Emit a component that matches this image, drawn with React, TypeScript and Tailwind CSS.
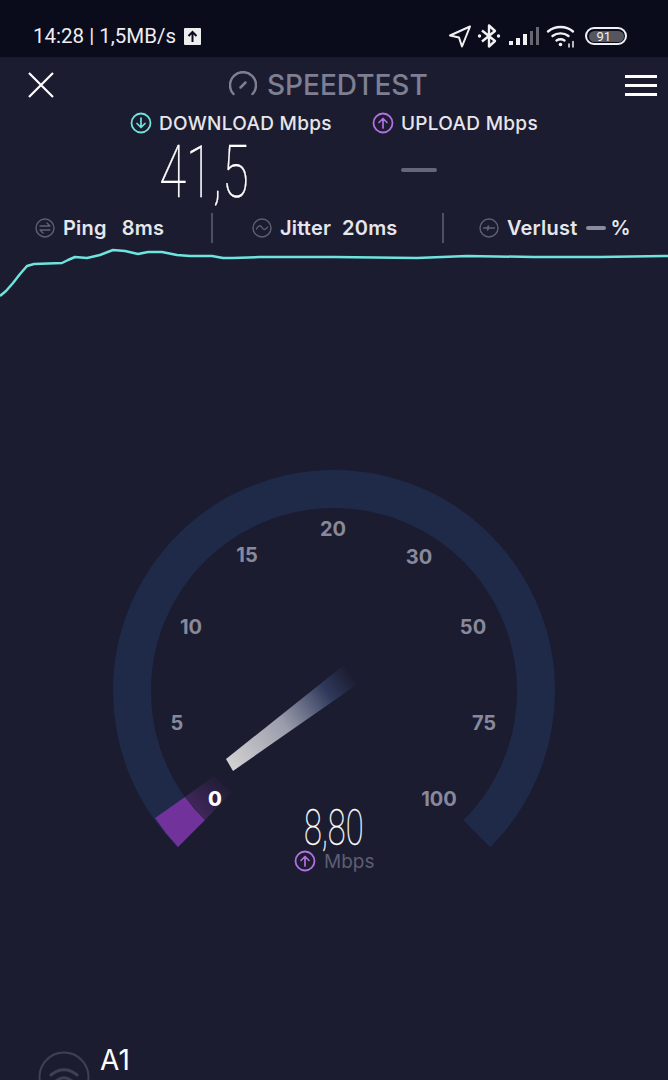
import type { JSX, ReactNode } from 'react'

const LINE_POINTS =
  '0,296 6,291 13,283 20,274 27,266 34,264 62,263 68,260 75,257 87,258 100,255 113,250 125,251 138,254 148,252 162,252 177,255 190,256 212,256 223,258 233,258 260,257 334,257 417,258 467,256 534,257 600,257 664,256 668,256'

const TICKS = [
  { label: '20', x: 333, y: 529 },
  { label: '15', x: 247, y: 555 },
  { label: '10', x: 191, y: 627 },
  { label: '5', x: 177, y: 723 },
  { label: '30', x: 419, y: 557 },
  { label: '50', x: 473, y: 627 },
  { label: '75', x: 484, y: 723 },
  { label: '100', x: 439, y: 799 },
]

function ArrowCircle({ down, color }: { down?: boolean; color: string }): JSX.Element {
  return (
    <svg width="22" height="22" viewBox="0 0 22 22" fill="none" stroke={color} strokeLinecap="round" strokeLinejoin="round" className="shrink-0">
      <circle cx="11" cy="11" r="9.5" strokeWidth="1.8" />
      {down ? (
        <path d="M11 6v9M7 11.5l4 4 4-4" strokeWidth="1.7" />
      ) : (
        <path d="M11 16V7M7 10.5l4-4 4 4" strokeWidth="1.7" />
      )}
    </svg>
  )
}

function StatIcon({ children }: { children: ReactNode }): JSX.Element {
  return (
    <svg width="20" height="20" viewBox="0 0 20 20" fill="none" stroke="#5f6073" strokeWidth="1.4" strokeLinecap="round" strokeLinejoin="round" className="shrink-0">
      <circle cx="10" cy="10" r="9" />
      {children}
    </svg>
  )
}

function StatusIcons(): JSX.Element {
  return (
    <div className="flex items-center">
      {/* location */}
      <svg width="24" height="24" viewBox="0 0 24 24" fill="none" stroke="#f1f1f4" strokeWidth="2" strokeLinejoin="round" className="mr-[5px]">
        <path d="M22 2.500 2 11.500l9 2 3 9z" />
      </svg>
      {/* bluetooth */}
      <svg width="24" height="26" viewBox="0 0 24 26" fill="none" stroke="#f1f1f4" strokeWidth="2.400" strokeLinejoin="round" className="mr-[8px]">
        <path d="M5 7.500 18 18l-6 5.500v-21L18 8 5 18.500" />
        <circle cx="2.500" cy="13" r="1.700" fill="#f1f1f4" stroke="none" />
        <circle cx="21.500" cy="13" r="1.700" fill="#f1f1f4" stroke="none" />
      </svg>
      {/* signal */}
      <div className="flex items-end gap-[3px] h-[18px] mr-[7px]">
        <div className="w-[4px] h-[4px] bg-[#f1f1f4]" />
        <div className="w-[4px] h-[7px] bg-[#f1f1f4]" />
        <div className="w-[4px] h-[11px] bg-[#f1f1f4]" />
        <div className="w-[3px] h-[14px] bg-[#66676f]" />
        <div className="w-[3px] h-[18px] bg-[#66676f]" />
      </div>
      {/* wifi */}
      <svg width="30" height="24" viewBox="0 0 30 24" fill="none" stroke="#f1f1f4" strokeWidth="2.400" strokeLinecap="round" className="mr-[9px]">
        <path d="M2 7.500C9 1.500 20 1.500 27 7.500" />
        <path d="M6.500 12C11 8.500 18 8.500 22.500 12" />
        <path d="M10.500 16.500C13 15 16 15 18.500 16.500" />
        <circle cx="14.500" cy="20.500" r="1.800" fill="#f1f1f4" stroke="none" />
        <path d="M23 20v3M27 17.500v5.500" strokeWidth="1.500" />
      </svg>
      {/* battery */}
      <div className="w-[42px] h-[18px] rounded-full border-2 border-[#f1f1f4] p-[1.500px] flex">
        <div className="w-full rounded-full bg-[#55565e] flex items-center pl-[8px] font-['Roboto',sans-serif] text-[13px] leading-none text-[#f1f1f4]">
          91
        </div>
      </div>
    </div>
  )
}

function Gauge(): JSX.Element {
  return (
    <svg width="668" height="730" viewBox="0 303 668 730" className="block">
      <defs>
        <linearGradient id="needle" gradientUnits="userSpaceOnUse" x1="229" y1="765" x2="352" y2="675">
          <stop offset="0" stopColor="#d2d2d2" />
          <stop offset="0.45" stopColor="#9a9cab" />
          <stop offset="0.8" stopColor="#2f3a5c" />
          <stop offset="1" stopColor="#1b1c30" />
        </linearGradient>
        <linearGradient id="wedge" gradientUnits="userSpaceOnUse" x1="195" y1="808" x2="226" y2="778">
          <stop offset="0" stopColor="#3f2659" />
          <stop offset="1" stopColor="#1b1c30" />
        </linearGradient>
      </defs>
      <path d="M191.200 833.800A202 202 0 1 1 476.800 833.800" fill="none" stroke="#1e2a47" strokeWidth="38" />
      <path d="M155 818A221 221 0 0 0 178 847L205 820A183 183 0 0 1 185 797Z" fill="#71329b" />
      <polygon points="185,797 205,820 232,792 214,776" fill="url(#wedge)" />
      <polygon points="226,759 233,771 362,681 344,665" fill="url(#needle)" />
      <g fontFamily="Inter, sans-serif" fontWeight="700" fontSize="20" fill="#88899a" textAnchor="middle" dominantBaseline="central">
        {TICKS.map((t) => (
          <text key={t.label} x={t.x} y={t.y}>
            {t.label}
          </text>
        ))}
        <text x="215" y="799" fill="#ffffff" fontWeight="800">
          0
        </text>
      </g>
    </svg>
  )
}

export default function App(): JSX.Element {
  return (
    <div className="relative w-[668px] h-[1080px] overflow-hidden bg-[#1b1c30] font-['Inter',sans-serif] text-[#e6e6ec]">
      {/* Status bar */}
      <div className="h-[57px] bg-[#0a0b1b] flex items-center justify-between pl-[33px] pr-[41px] pt-[15px]">
        <div className="flex items-center gap-[8px] font-['Roboto',sans-serif] text-[20.5px] text-[#eeeef1]">
          <span>14:28 | 1,5MB/s</span>
          <div className="w-[17px] h-[17px] rounded-[1px] bg-[#eeeef1] flex items-center justify-center">
            <svg width="13" height="13" viewBox="0 0 13 13" fill="none" stroke="#0a0b1b" strokeWidth="2">
              <path d="M6.500 12V2M2.500 6l4-4 4 4" />
            </svg>
          </div>
        </div>
        <StatusIcons />
      </div>

      {/* Header */}
      <div className="relative h-[56px] flex items-center justify-between pl-[27px] pr-[11px]">
        <svg width="28" height="28" viewBox="0 0 28 28" stroke="#ffffff" strokeWidth="2.200" fill="none">
          <path d="M2 2l24 24M26 2L2 26" />
        </svg>
        <div className="absolute left-[229px] top-0 h-full flex items-center gap-[10px]">
          <svg width="28" height="28" viewBox="0 0 28 28" fill="none" stroke="#7e7f92" strokeWidth="2.500" strokeLinecap="round">
            <path d="M4.500 23A13 13 0 1 1 23.500 23" />
            <path d="M11.500 16.500l5-5" />
          </svg>
          <span className="text-[28px] font-medium leading-none text-[#7e7f92]">SPEEDTEST</span>
        </div>
        <div className="flex flex-col gap-[6px] w-[32px]">
          <div className="h-[3px] bg-white" />
          <div className="h-[3px] bg-white" />
          <div className="h-[3px] bg-white" />
        </div>
      </div>

      {/* Download / upload labels */}
      <div className="flex h-[20px] items-center pl-[130px] text-[19px] tracking-[0.3px] font-medium leading-none">
        <div className="flex items-center gap-[7px] w-[242px]">
          <ArrowCircle down color="#6fe3de" />
          <span>DOWNLOAD Mbps</span>
        </div>
        <div className="flex items-center gap-[7px]">
          <ArrowCircle color="#b46fe0" />
          <span>UPLOAD Mbps</span>
        </div>
      </div>

      {/* Values */}
      <div className="flex h-[80px] items-center">
        <div className="w-[408px] flex justify-center">
          <span className="block w-[140px] text-center font-['Roboto',sans-serif] font-thin text-[72px] leading-[60px] text-white scale-x-[0.68] [-webkit-text-stroke:0.35px_#ffffff]">
            41,5
          </span>
        </div>
        <div className="ml-[-7px] mt-[-6px] w-[36px] h-[4px] rounded-full bg-[#65667a]" />
      </div>

      {/* Ping, jitter, loss */}
      <div className="flex h-[30px] items-center text-[20px] tracking-[0.2px] font-semibold leading-none">
        <div className="flex items-center w-[211px] pl-[35px]">
          <StatIcon>
            <path d="M5 8h10l-3-3M15 12H5l3 3" />
          </StatIcon>
          <span className="ml-[8px]">Ping</span>
          <span className="ml-[15px]">8ms</span>
        </div>
        <div className="w-[2px] h-[30px] bg-[#4e4f63]" />
        <div className="flex items-center w-[229px] pl-[39px]">
          <StatIcon>
            <path d="M4.500 11c2-4 4-4 5.500-1.500S13.500 12.500 15.500 9" />
          </StatIcon>
          <span className="ml-[8px]">Jitter</span>
          <span className="ml-[11px]">20ms</span>
        </div>
        <div className="w-[2px] h-[30px] bg-[#4e4f63]" />
        <div className="flex items-center pl-[35px]">
          <StatIcon>
            <path d="M4.500 10h3.500l1.500-2-1 4 1.500-2h5.500" />
          </StatIcon>
          <span className="ml-[8px]">Verlust</span>
          <div className="ml-[9px] w-[20px] h-[4px] rounded-full bg-[#8a8b9c]" />
          <span className="ml-[4px]">%</span>
        </div>
      </div>

      {/* Speed line */}
      <svg width="668" height="60" viewBox="0 243 668 60" className="block">
        <polyline points={LINE_POINTS} fill="none" stroke="#6fe3de" strokeWidth="2.500" strokeLinejoin="round" />
      </svg>

      {/* Gauge: the current speed sits over the dial */}
      <div className="relative h-[730px]">
        <div className="absolute left-0 top-0 pointer-events-none">
          <Gauge />
        </div>
        <div className="absolute left-[284px] top-[505px] w-[100px] flex justify-center">
          <span className="font-['Roboto',sans-serif] font-thin text-[50px] leading-[40px] text-white scale-x-[0.65] [-webkit-text-stroke:0.35px_#ffffff]">8,80</span>
        </div>
        <div className="absolute left-[294px] top-[547px] flex items-center gap-[8px]">
          <ArrowCircle color="#b46fe0" />
          <span className="text-[19px] leading-none text-[#5d5e71]">Mbps</span>
        </div>
        <div className="absolute left-[38px] top-[748px]">
          <svg width="52" height="52" viewBox="0 0 52 52" fill="none" stroke="#3f4054" strokeWidth="2">
            <circle cx="26" cy="26" r="24.500" />
            <path d="M13 24c8-7 18-7 26 0M18 30c5-4 11-4 16 0" strokeWidth="3" strokeLinecap="round" />
          </svg>
        </div>
        <div className="absolute left-[100px] top-[743px] text-[28px] leading-none text-white">A1</div>
      </div>
    </div>
  )
}
